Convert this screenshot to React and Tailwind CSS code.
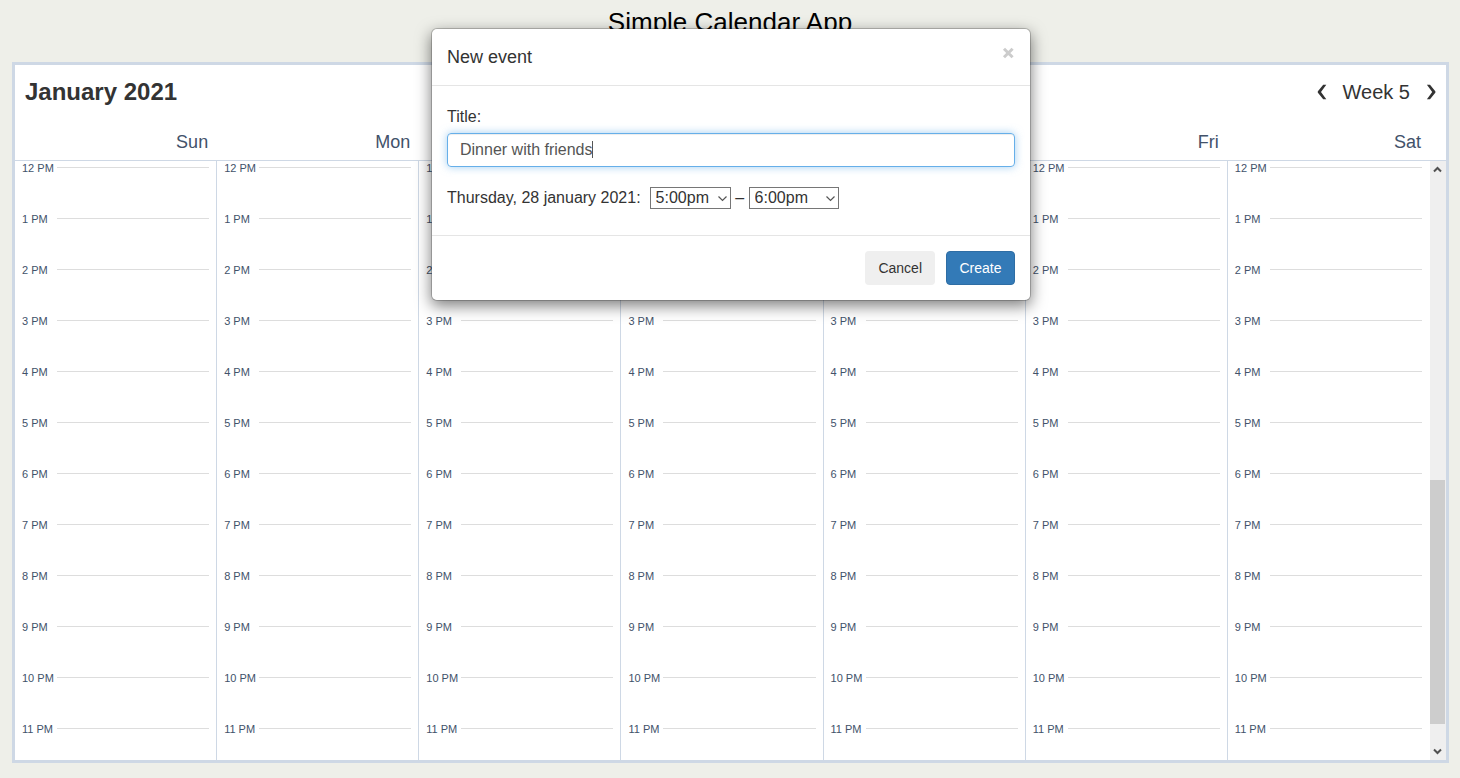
import React from "react";

const days = ["Sun", "Mon", "Tue", "Wed", "Thu", "Fri", "Sat"];
const hours = [12, 1, 2, 3, 4, 5, 6, 7, 8, 9, 10, 11].map((h) => `${h} PM`);
const times = ["4:00pm", "5:00pm", "6:00pm", "7:00pm", "8:00pm"];

function Header() {
  return (
    <div className="border-b border-[#ced8e5]">
      <div className="flex h-[54px] items-center justify-between px-2.5 text-[#333]">
        <h2 className="text-2xl font-bold">January 2021</h2>
        <div className="flex items-center text-xl">
          <button type="button" aria-label="Previous week">
            <svg width="10" height="16" viewBox="0 0 10 16" fill="#333">
              <path d="M6.200 0.800H9.300L4 8L9.300 15.200H6.200L0.900 8.700Q0.500 8 0.900 7.300Z" />
            </svg>
          </button>
          <span className="px-4">Week 5</span>
          <button type="button" aria-label="Next week">
            <svg width="10" height="16" viewBox="0 0 10 16" fill="#333">
              <path d="M4 0.800H0.900L6.200 8L0.900 15.200H4L9.300 8.700Q9.700 8 9.300 7.300Z" />
            </svg>
          </button>
        </div>
      </div>
      <div className="mr-4 grid h-[41px] grid-cols-7 items-center pt-1 text-right text-lg text-[#42526a]">
        {days.map((d) => (
          <div key={d} className="pr-[9px]">
            {d}
          </div>
        ))}
      </div>
    </div>
  );
}

function DayColumn({ last }) {
  return (
    <div className={last ? "pr-2 pl-[7px]" : "border-r border-[#ced8e5] px-[7px]"}>
      {hours.map((h) => (
        <div key={h} className="flex h-[51px] items-start">
          <span className="w-[35px] shrink-0 whitespace-nowrap text-[11px] leading-[14px] text-[#42526a]">
            {h}
          </span>
          <span className="mt-1.5 h-px flex-1 bg-[#ddd]" />
        </div>
      ))}
    </div>
  );
}

function Scrollbar() {
  return (
    <div className="flex w-4 shrink-0 flex-col bg-[#efefef]">
      <button type="button" aria-label="Scroll up" className="flex h-[17px] w-[15px] items-center justify-center">
        <svg width="9" height="7" viewBox="0 0 9 7" fill="none" stroke="#505050" strokeWidth="2">
          <path d="M1 5.500L4.500 2L8 5.500" />
        </svg>
      </button>
      <div className="flex flex-1 flex-col">
        <div className="grow-[302]" />
        <div className="w-[15px] grow-[244] bg-[#cdcdcd]" />
        <div className="grow-[19]" />
      </div>
      <button type="button" aria-label="Scroll down" className="flex h-[17px] w-[15px] items-center justify-center">
        <svg width="9" height="7" viewBox="0 0 9 7" fill="none" stroke="#505050" strokeWidth="2">
          <path d="M1 1.500L4.500 5L8 1.500" />
        </svg>
      </button>
    </div>
  );
}

function TimeSelect({ label, value, className }) {
  return (
    <span className={"relative flex " + className}>
      <select
        aria-label={label}
        defaultValue={value}
        className="h-[22px] w-full appearance-none border border-[#767676] bg-white pl-[5px] text-base leading-5 text-[#333]"
      >
        {times.map((t) => (
          <option key={t}>{t}</option>
        ))}
      </select>
      <svg
        className="pointer-events-none absolute right-1 top-2"
        width="9"
        height="7"
        viewBox="0 0 9 7"
        fill="none"
        stroke="#555"
        strokeWidth="1.2"
      >
        <path d="M0.500 1.500L4.500 5.500L8.500 1.500" />
      </svg>
    </span>
  );
}

function EventDialog() {
  return (
    <div className="absolute inset-0 flex items-start justify-center pl-0.5 pt-7">
      <form
        role="dialog"
        aria-labelledby="dialog-title"
        onSubmit={(e) => e.preventDefault()}
        className="w-full max-w-[600px] rounded-md border border-black/20 bg-white bg-clip-padding text-[#333] shadow-[0_5px_15px_rgba(0,0,0,0.5)]"
      >
        <div className="flex h-[57px] items-center justify-between border-b border-[#e5e5e5] px-[15px]">
          <h3 id="dialog-title" className="text-lg">
            New event
          </h3>
          <button type="button" aria-label="Close" className="pb-2">
            <svg width="13" height="12" viewBox="0 0 13 12" fill="none" stroke="#ccc" strokeWidth="3">
              <path d="M2 1.700L10.600 10.300M10.600 1.700L2 10.300" />
            </svg>
          </button>
        </div>
        <div className="px-[15px] pt-5 pb-[26px] text-base">
          <label htmlFor="event-title" className="block leading-[22px]">
            Title:
          </label>
          <div className="relative mt-[5px] flex">
            <input
              id="event-title"
              type="text"
              defaultValue="Dinner with friends"
              className="h-[34px] w-full rounded border border-[#66afe9] px-3 text-base text-[#555] caret-transparent shadow-[inset_0_1px_1px_rgba(0,0,0,0.075),0_0_8px_rgba(102,175,233,0.6)] outline-none"
            />
            <span className="absolute left-[145px] top-2 h-[17px] w-px bg-[#555]" />
          </div>
          <div className="mt-5 flex items-center leading-[22px]">
            <span className="mr-[9px]">Thursday, 28 january 2021:</span>
            <TimeSelect label="Start time" value="5:00pm" className="w-[81px]" />
            <span className="w-[18px] text-center">–</span>
            <TimeSelect label="End time" value="6:00pm" className="w-[90px]" />
          </div>
        </div>
        <div className="flex justify-end gap-[11px] border-t border-[#e5e5e5] p-[15px] text-sm">
          <button type="button" className="h-[34px] min-w-[69px] rounded bg-[#efefef] px-[13px]">
            Cancel
          </button>
          <button
            type="submit"
            className="h-[34px] min-w-[69px] rounded border border-[#2e6da4] bg-[#337ab7] px-3 text-white"
          >
            Create
          </button>
        </div>
      </form>
    </div>
  );
}

export default function App() {
  return (
    <div className="relative flex h-screen flex-col bg-[#eeefe9] font-['Liberation_Sans',Arial,sans-serif]">
      <h1 className="pt-[7px] pb-[25px] text-center text-[26px] leading-[30px] text-black">
        Simple Calendar App
      </h1>
      <main className="mr-[11px] mb-[15px] ml-3 flex min-h-0 flex-1 flex-col border-3 border-[#ced8e5] bg-white">
        <Header />
        <div className="flex min-h-0 flex-1 overflow-hidden">
          <div className="grid flex-1 grid-cols-7">
            {days.map((d, i) => (
              <DayColumn key={d} last={i === days.length - 1} />
            ))}
          </div>
          <Scrollbar />
        </div>
      </main>
      <EventDialog />
    </div>
  );
}
